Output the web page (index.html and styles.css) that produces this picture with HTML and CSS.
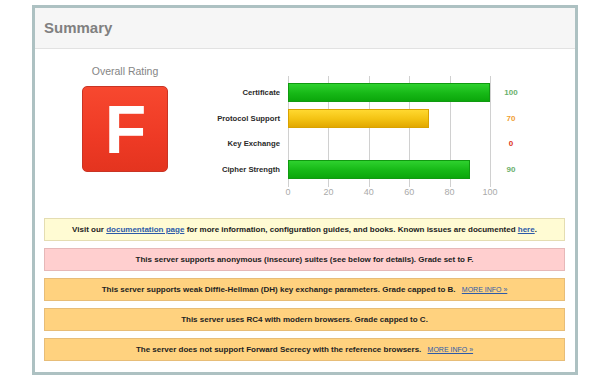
FILE: index.html
```html
<!DOCTYPE html>
<html>
<head>
<meta charset="utf-8">
<link rel="stylesheet" href="styles.css">
</head>
<body>
<div class="summary">
  <div class="summary-head">Summary</div>
  <div class="summary-body">
    <div class="top">
      <div class="rating">
        <div class="rating-title">Overall Rating</div>
        <div class="grade">F</div>
      </div>
      <div class="chart">
        <div class="chart-main">
          <div class="labels">
            <div class="label">Certificate</div>
            <div class="label">Protocol Support</div>
            <div class="label">Key Exchange</div>
            <div class="label">Cipher Strength</div>
          </div>
          <div class="plot">
            <span class="grid" style="left:0%"></span>
            <span class="grid" style="left:20%"></span>
            <span class="grid" style="left:40%"></span>
            <span class="grid" style="left:60%"></span>
            <span class="grid" style="left:80%"></span>
            <span class="grid" style="left:100%"></span>
            <div class="bar-row"><div class="bar green" style="width:100%"></div></div>
            <div class="bar-row"><div class="bar yellow" style="width:70%"></div></div>
            <div class="bar-row"></div>
            <div class="bar-row"><div class="bar green" style="width:90%"></div></div>
          </div>
          <div class="values">
            <div class="value v-green">100</div>
            <div class="value v-orange">70</div>
            <div class="value v-red">0</div>
            <div class="value v-green">90</div>
          </div>
        </div>
        <div class="axis">
          <span class="tick" style="left:0%">0</span>
          <span class="tick" style="left:20%">20</span>
          <span class="tick" style="left:40%">40</span>
          <span class="tick" style="left:60%">60</span>
          <span class="tick" style="left:80%">80</span>
          <span class="tick" style="left:100%">100</span>
        </div>
      </div>
    </div>
    <div class="notices">
      <div class="notice info">Visit our <a href="#">documentation page</a> for more information, configuration guides, and books. Known issues are documented <a href="#">here</a>.</div>
      <div class="notice error">This server supports anonymous (insecure) suites (see below for details). Grade set to F.</div>
      <div class="notice warn">This server supports weak Diffie-Hellman (DH) key exchange parameters. Grade capped to B. <a class="more" href="#">MORE INFO »</a></div>
      <div class="notice warn">This server uses RC4 with modern browsers. Grade capped to C.</div>
      <div class="notice warn">The server does not support Forward Secrecy with the reference browsers. <a class="more" href="#">MORE INFO »</a></div>
    </div>
  </div>
</div>
</body>
</html>
```
FILE: styles.css
```css
* { box-sizing: border-box; }
html, body { margin: 0; padding: 0; background: #fff; }
body { font-family: "Liberation Sans", Arial, sans-serif; }

.summary {
  margin: 5px 0 0 32px;
  width: 546px;
  height: 370px;
  border: 3px solid #adc1c2;
  background: #fff;
}
.summary-head {
  height: 41px;
  background: #f6f6f6;
  border-bottom: 1px solid #e2e2e2;
  padding-left: 9px;
  line-height: 40px;
  font-size: 15px;
  font-weight: bold;
  color: #808080;
}
.summary-body { padding: 0 10px 0 0; }

.top { display: flex; }
.rating { width: 180px; display: flex; flex-direction: column; align-items: center; padding-top: 16px; }
.rating-title { font-size: 10.5px; line-height: 12px; color: #858585; }
.grade {
  margin-top: 9px;
  width: 86px; height: 86px;
  border: 1px solid #c93424;
  border-radius: 5px;
  background: linear-gradient(#f7482f, #ee3a25 60%, #e4341f);
  color: #fff;
  font-size: 68px;
  font-weight: bold;
  line-height: 84px;
  text-align: center;
  padding-left: 1px;
}

.chart { margin-top: 27px; }
.chart-main { display: flex; }
.labels, .values, .plot { display: flex; flex-direction: column; gap: 6.67px; padding-top: 7px; }
.labels { width: 65px; text-align: right; }
.label { height: 19px; line-height: 19px; font-size: 7.7px; font-weight: bold; color: #2a2a2a; white-space: nowrap; }
.plot { position: relative; width: 202px; margin-left: 8px; padding-bottom: 8px; }
.grid { position: absolute; top: 0; bottom: 0; width: 1px; background: #d0d0d0; }
.bar-row { height: 19px; position: relative; }
.bar { height: 19px; position: relative; }
.green { background: linear-gradient(#2ed12e, #16b816 55%, #0ba70b); border: 1px solid #109a10; }
.yellow { background: linear-gradient(#ffd830, #f4c414 50%, #e2a800); border: 1px solid #d9a200; }
.values { width: 42px; text-align: center; }
.value { height: 19px; line-height: 19px; font-size: 8px; font-weight: bold; }
.v-green { color: #6bb06b; }
.v-orange { color: #f0a030; }
.v-red { color: #dd3322; }

.axis { position: relative; margin-left: 73px; width: 202px; height: 10px; }
.tick { position: absolute; top: 0; transform: translateX(-50%); font-size: 9px; line-height: 10px; color: #aaa; }

.notices { margin: 21px 0 0 9px; display: flex; flex-direction: column; gap: 7px; }
.notice {
  height: 23px;
  border: 1px solid;
  text-align: center;
  font-size: 8px;
  font-weight: bold;
  line-height: 21px;
  color: #222;
  white-space: nowrap;
}
.notice a { color: #2d5aa8; text-decoration: underline; }
.notice a.more { font-size: 7px; margin-left: 4px; font-weight: normal; }
.info { background: #fffbd3; border-color: #e4ddb2; }
.error { background: #ffcfcf; border-color: #e6b8b8; }
.warn { background: #ffd27f; border-color: #e7bd78; }
```
